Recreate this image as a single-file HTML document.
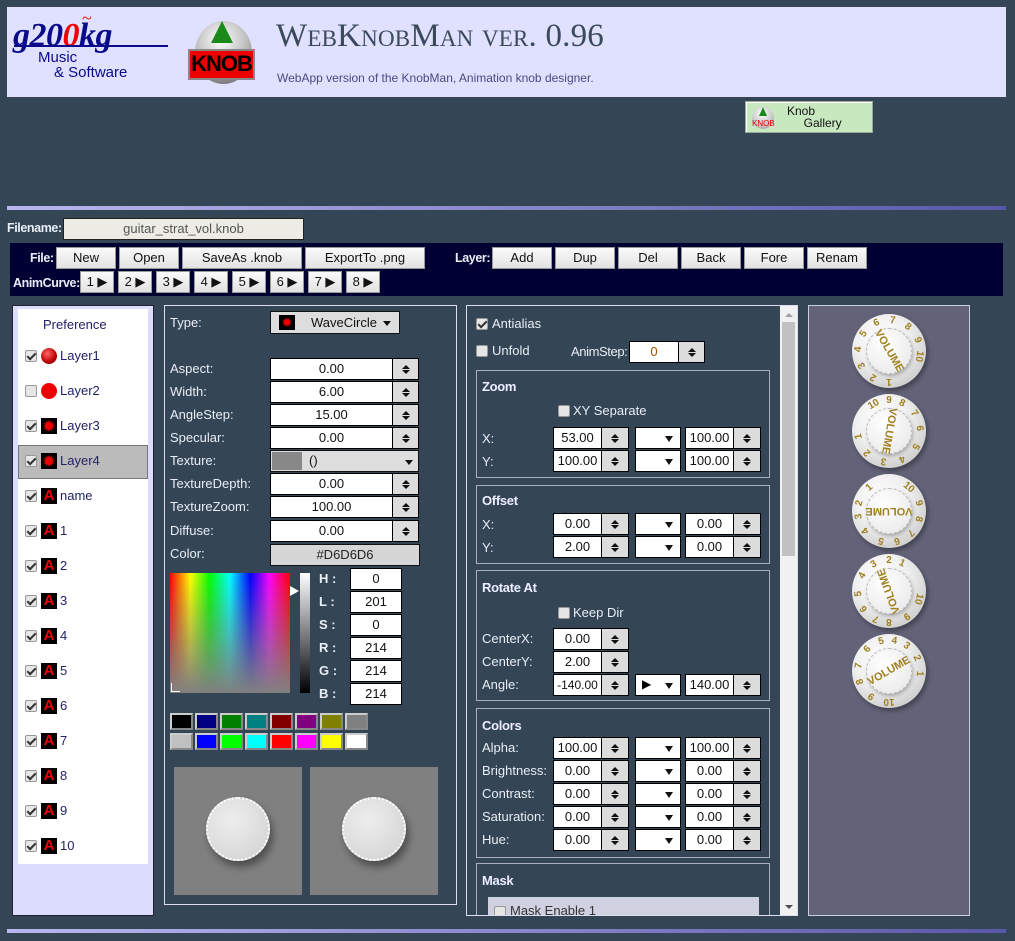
<!DOCTYPE html>
<html><head><meta charset="utf-8"><style>
*{box-sizing:border-box;margin:0;padding:0}
body{width:1015px;height:941px;background:#344556;position:relative;overflow:hidden;font-family:"Liberation Sans",sans-serif;font-size:13px;color:#e8eef6}
.a{position:absolute}
.l{position:absolute;color:#e8eef6;font-size:13px;line-height:16px;white-space:nowrap}
.bl{font-weight:bold;font-size:12.5px;letter-spacing:-0.4px}
.b{position:absolute;height:22px;background:linear-gradient(#fafafa,#e2e2e2);border:1px solid #999;color:#111;font-size:13px;text-align:center;line-height:20px}
.in{position:absolute;height:22px;background:#fff;border:1px solid #000;color:#111;text-align:center;line-height:20px;font-size:13px}
.sp{position:absolute;height:22px;width:28px;background:#dcdcdc;border:1px solid #000}
.sp:before,.sp:after{content:"";position:absolute;left:50%;margin-left:-4px;border-left:4px solid transparent;border-right:4px solid transparent}
.sp:before{top:6px;border-bottom:4px solid #111}
.sp:after{top:11px;border-top:4px solid #111}
.sel{position:absolute;height:22px;width:46px;background:#fff;border:1px solid #000}
.sel:after{content:"";position:absolute;right:7px;top:8px;border-left:4px solid transparent;border-right:4px solid transparent;border-top:6px solid #111}
.cb{position:absolute;width:12px;height:12px;background:#e6e6e6;border:1px solid #999;border-radius:2px}
.cb.c:after{content:"";position:absolute;left:3px;top:0px;width:3px;height:7px;border:solid #333;border-width:0 2px 2px 0;transform:rotate(45deg)}
.box{position:absolute;border:1px solid #aab0bb}
.t{position:absolute;font-weight:bold;font-size:13px;color:#eef;letter-spacing:-0.3px}
.lay{position:absolute;left:25px;height:16px;color:#222266;font-size:13px}
.ic{position:absolute;left:16px;top:0;width:16px;height:16px;background:#000;color:#e00;font-weight:bold;font-size:15px;line-height:16px;text-align:center;font-family:"Liberation Sans",sans-serif}
.ic.s{color:#e00;font-size:14px}
.lt{position:absolute;left:35px;top:0;line-height:16px}
.sw{position:absolute;width:23px;height:17px;border:2px solid #ccc;border-right-color:#888;border-bottom-color:#888}
.kn{position:absolute;width:74px;height:74px;border-radius:50%;background:radial-gradient(circle at 40% 35%,#fff 0,#f0f0f0 40%,#ccc 80%,#aaa 100%);box-shadow:2px 3px 5px rgba(0,0,0,.35)}
.kn i{position:absolute;left:14px;top:14px;width:46px;height:46px;border-radius:50%;border:1px dashed #bbb;background:radial-gradient(circle at 40% 35%,#fff,#e6e6e6);box-shadow:1px 2px 3px rgba(0,0,0,.25)}
.kn b{position:absolute;left:0;top:30px;width:74px;text-align:center;font-size:11px;line-height:14px;color:#a08020;font-family:"Liberation Sans",sans-serif;transform-origin:37px 7px}
.kn s{position:absolute;left:30px;top:1px;width:14px;text-align:center;font-size:10px;font-weight:bold;line-height:11px;color:#a08020;text-decoration:none;transform-origin:7px 36px}
</style></head><body>

<!-- header -->
<div class="a" style="left:7px;top:7px;width:999px;height:90px;background:#e0e0ff"></div>
<div class="a" style="left:13px;top:17px;font:italic bold 34px 'Liberation Serif',serif;color:#0a0a8a;letter-spacing:-0.5px">g20<span style="color:#e00">0</span>kg</div>
<div class="a" style="left:82px;top:8px;font:18px 'Liberation Serif',serif;color:#e00">~</div>
<div class="a" style="left:14px;top:45px;width:154px;height:2px;background:#0a0a8a"></div>
<div class="a" style="left:38px;top:49px;font-size:15px;color:#0a0a8a">Music</div>
<div class="a" style="left:54px;top:64px;font-size:15px;color:#0a0a8a">&amp; Software</div>
<div class="a" style="left:195px;top:21px;width:57px;height:63px;border-radius:50%;background:radial-gradient(circle at 45% 30%,#fff,#bbb 50%,#555 100%)"></div>
<div class="a" style="left:211px;top:21px;width:0;height:0;border-left:11px solid transparent;border-right:11px solid transparent;border-bottom:22px solid #1a8a1a"></div>
<div class="a" style="left:188px;top:49px;width:67px;height:31px;background:#e00;border:2px solid #888;color:#000;font:bold 22px 'Liberation Sans',sans-serif;text-align:center;line-height:26px;letter-spacing:-1px">KNOB</div>
<div class="a" style="left:276px;top:18px;font:33px 'Liberation Serif',serif;font-variant:small-caps;color:#3a4a5a;letter-spacing:0.2px">WebKnobMan ver. 0.96</div>
<div class="a" style="left:277px;top:71px;font-size:12px;color:#4a4a80">WebApp version of the KnobMan, Animation knob designer.</div>

<div class="a" style="left:745px;top:101px;width:128px;height:32px;background:#c8e8c0;border:1px solid #9a9;box-shadow:1px 1px 0 #fff inset"></div>
<div class="a" style="left:752px;top:107px;width:22px;height:22px;border-radius:50%;background:radial-gradient(circle at 45% 30%,#fff,#999)"></div>
<div class="a" style="left:759px;top:107px;border-left:4px solid transparent;border-right:4px solid transparent;border-bottom:9px solid #1a8a1a"></div>
<div class="a" style="left:752px;top:119px;font-size:8px;color:#e00">KNOB</div>
<div class="a" style="left:787px;top:105px;color:#111;font-size:12px;line-height:12px">Knob<br>&nbsp;&nbsp;&nbsp;&nbsp;&nbsp;Gallery</div>

<div class="a" style="left:7px;top:206px;width:999px;height:4px;background:linear-gradient(90deg,#b8b8f0,#5858a8)"></div>
<div class="a" style="left:7px;top:929px;width:999px;height:4px;background:linear-gradient(90deg,#b8b8f0,#5858a8)"></div>

<div class="l bl" style="left:7px;top:220px">Filename:</div>
<div class="a" style="left:63px;top:218px;width:241px;height:22px;background:#ecebe4;border:1px solid #222;color:#555;text-align:center;line-height:20px">guitar_strat_vol.knob</div>

<!-- toolbar -->
<div class="a" style="left:10px;top:243px;width:993px;height:53px;background:#000033"></div>
<div class="l bl" style="left:30px;top:250px">File:</div>
<div class="b" style="left:56px;top:247px;width:60px">New</div>
<div class="b" style="left:119px;top:247px;width:60px">Open</div>
<div class="b" style="left:182px;top:247px;width:120px">SaveAs .knob</div>
<div class="b" style="left:305px;top:247px;width:120px">ExportTo .png</div>
<div class="l bl" style="left:455px;top:250px">Layer:</div>
<div class="b" style="left:492px;top:247px;width:60px">Add</div>
<div class="b" style="left:555px;top:247px;width:60px">Dup</div>
<div class="b" style="left:618px;top:247px;width:60px">Del</div>
<div class="b" style="left:681px;top:247px;width:60px">Back</div>
<div class="b" style="left:744px;top:247px;width:60px">Fore</div>
<div class="b" style="left:807px;top:247px;width:60px">Renam</div>
<div class="l bl" style="left:13px;top:275px">AnimCurve:</div>
<div class="b" style="left:80px;top:271px;width:34px">1 ▶</div>
<div class="b" style="left:118px;top:271px;width:34px">2 ▶</div>
<div class="b" style="left:156px;top:271px;width:34px">3 ▶</div>
<div class="b" style="left:194px;top:271px;width:34px">4 ▶</div>
<div class="b" style="left:232px;top:271px;width:34px">5 ▶</div>
<div class="b" style="left:270px;top:271px;width:34px">6 ▶</div>
<div class="b" style="left:308px;top:271px;width:34px">7 ▶</div>
<div class="b" style="left:346px;top:271px;width:34px">8 ▶</div>

<!-- left panel -->
<div class="a" style="left:12px;top:305px;width:142px;height:611px;background:#dcdcff;border:1px solid #223"></div>
<div class="a" style="left:18px;top:309px;width:130px;height:555px;background:#fff"></div>
<div class="a" style="left:43px;top:317px;color:#222266">Preference</div>
<div class="a" style="left:18px;top:445px;width:130px;height:34px;background:#bbb;border:1px solid #777"></div>
<div class="a" style="left:0;top:348px">
<div class="lay" style="top:0"><div class="cb c" style="left:0;top:2px"></div><div class="ic" style="background:radial-gradient(circle at 40% 35%,#f66,#b00 60%,#600);border-radius:50%"></div><div class="lt">Layer1</div></div>
<div class="lay" style="top:35px"><div class="cb" style="left:0;top:2px"></div><div class="ic" style="background:#e00;border-radius:50%"></div><div class="lt">Layer2</div></div>
<div class="lay" style="top:70px"><div class="cb c" style="left:0;top:2px"></div><div class="ic s">✹</div><div class="lt">Layer3</div></div>
<div class="lay" style="top:105px"><div class="cb c" style="left:0;top:2px"></div><div class="ic s">✹</div><div class="lt">Layer4</div></div>
<div class="lay" style="top:140px"><div class="cb c" style="left:0;top:2px"></div><div class="ic">A</div><div class="lt">name</div></div>
<div class="lay" style="top:175px"><div class="cb c" style="left:0;top:2px"></div><div class="ic">A</div><div class="lt">1</div></div>
<div class="lay" style="top:210px"><div class="cb c" style="left:0;top:2px"></div><div class="ic">A</div><div class="lt">2</div></div>
<div class="lay" style="top:245px"><div class="cb c" style="left:0;top:2px"></div><div class="ic">A</div><div class="lt">3</div></div>
<div class="lay" style="top:280px"><div class="cb c" style="left:0;top:2px"></div><div class="ic">A</div><div class="lt">4</div></div>
<div class="lay" style="top:315px"><div class="cb c" style="left:0;top:2px"></div><div class="ic">A</div><div class="lt">5</div></div>
<div class="lay" style="top:350px"><div class="cb c" style="left:0;top:2px"></div><div class="ic">A</div><div class="lt">6</div></div>
<div class="lay" style="top:385px"><div class="cb c" style="left:0;top:2px"></div><div class="ic">A</div><div class="lt">7</div></div>
<div class="lay" style="top:420px"><div class="cb c" style="left:0;top:2px"></div><div class="ic">A</div><div class="lt">8</div></div>
<div class="lay" style="top:455px"><div class="cb c" style="left:0;top:2px"></div><div class="ic">A</div><div class="lt">9</div></div>
<div class="lay" style="top:490px"><div class="cb c" style="left:0;top:2px"></div><div class="ic">A</div><div class="lt">10</div></div>
</div>

<!-- middle panel -->
<div class="box" style="left:164px;top:305px;width:293px;height:600px;border-color:#dde"></div>
<div class="l" style="left:170px;top:315px">Type:</div>
<div class="a" style="left:270px;top:311px;width:130px;height:23px;background:#ddd;border:1px solid #111;color:#111;line-height:21px;padding-left:40px">WaveCircle</div>
<div class="a" style="left:279px;top:315px;width:16px;height:15px;background:#000;color:#e00;font-size:13px;line-height:15px;text-align:center">✹</div>
<div class="a" style="left:383px;top:321px;border-left:4px solid transparent;border-right:4px solid transparent;border-top:5px solid #111"></div>

<div class="l" style="left:170px;top:361px">Aspect:</div><div class="in" style="left:270px;top:358px;width:123px">0.00</div><div class="sp" style="left:392px;top:358px;width:27px"></div>
<div class="l" style="left:170px;top:384px">Width:</div><div class="in" style="left:270px;top:381px;width:123px">6.00</div><div class="sp" style="left:392px;top:381px;width:27px"></div>
<div class="l" style="left:170px;top:407px">AngleStep:</div><div class="in" style="left:270px;top:404px;width:123px">15.00</div><div class="sp" style="left:392px;top:404px;width:27px"></div>
<div class="l" style="left:170px;top:430px">Specular:</div><div class="in" style="left:270px;top:427px;width:123px">0.00</div><div class="sp" style="left:392px;top:427px;width:27px"></div>
<div class="l" style="left:170px;top:453px">Texture:</div>
<div class="a" style="left:270px;top:450px;width:149px;height:22px;background:#ddd;border:1px solid #111;color:#111;line-height:20px;padding-left:38px">()</div>
<div class="a" style="left:272px;top:452px;width:30px;height:18px;background:#888"></div>
<div class="a" style="left:405px;top:460px;border-left:4px solid transparent;border-right:4px solid transparent;border-top:5px solid #111"></div>
<div class="l" style="left:170px;top:476px">TextureDepth:</div><div class="in" style="left:270px;top:473px;width:123px">0.00</div><div class="sp" style="left:392px;top:473px;width:27px"></div>
<div class="l" style="left:170px;top:499px">TextureZoom:</div><div class="in" style="left:270px;top:496px;width:123px">100.00</div><div class="sp" style="left:392px;top:496px;width:27px"></div>
<div class="l" style="left:170px;top:523px">Diffuse:</div><div class="in" style="left:270px;top:520px;width:123px">0.00</div><div class="sp" style="left:392px;top:520px;width:27px"></div>
<div class="l" style="left:170px;top:546px">Color:</div>
<div class="a" style="left:270px;top:544px;width:150px;height:22px;background:#d6d6d6;border:1px solid #111;color:#222;text-align:center;line-height:20px">#D6D6D6</div>

<div class="a" style="left:170px;top:573px;width:120px;height:120px;background:linear-gradient(rgba(128,128,128,0),#808080),linear-gradient(90deg,#f00,#ff0 17%,#0f0 33%,#0ff 50%,#00f 67%,#f0f 83%,#f00)"></div>
<div class="a" style="left:171px;top:683px;width:9px;height:9px;border-left:1px solid #fff;border-bottom:1px solid #fff"></div>
<div class="a" style="left:300px;top:573px;width:10px;height:120px;background:linear-gradient(#fff,#000)"></div>
<div class="a" style="left:290px;top:586px;border-top:5px solid transparent;border-bottom:5px solid transparent;border-left:9px solid #fff"></div>
<div class="l" style="left:319px;top:571px;font-weight:bold">H :</div><div class="in" style="left:350px;top:568px;width:52px">0</div>
<div class="l" style="left:319px;top:594px;font-weight:bold">L :</div><div class="in" style="left:350px;top:591px;width:52px">201</div>
<div class="l" style="left:319px;top:617px;font-weight:bold">S :</div><div class="in" style="left:350px;top:614px;width:52px">0</div>
<div class="l" style="left:319px;top:640px;font-weight:bold">R :</div><div class="in" style="left:350px;top:637px;width:52px">214</div>
<div class="l" style="left:319px;top:663px;font-weight:bold">G :</div><div class="in" style="left:350px;top:660px;width:52px">214</div>
<div class="l" style="left:319px;top:686px;font-weight:bold">B :</div><div class="in" style="left:350px;top:683px;width:52px">214</div>

<div class="sw" style="left:170px;top:713px;background:#000"></div><div class="sw" style="left:195px;top:713px;background:#000080"></div><div class="sw" style="left:220px;top:713px;background:#008000"></div><div class="sw" style="left:245px;top:713px;background:#008080"></div><div class="sw" style="left:270px;top:713px;background:#800000"></div><div class="sw" style="left:295px;top:713px;background:#800080"></div><div class="sw" style="left:320px;top:713px;background:#808000"></div><div class="sw" style="left:345px;top:713px;background:#808080"></div>
<div class="sw" style="left:170px;top:733px;background:#c0c0c0"></div><div class="sw" style="left:195px;top:733px;background:#00f"></div><div class="sw" style="left:220px;top:733px;background:#0f0"></div><div class="sw" style="left:245px;top:733px;background:#0ff"></div><div class="sw" style="left:270px;top:733px;background:#f00"></div><div class="sw" style="left:295px;top:733px;background:#f0f"></div><div class="sw" style="left:320px;top:733px;background:#ff0"></div><div class="sw" style="left:345px;top:733px;background:#fff"></div>

<div class="a" style="left:174px;top:767px;width:128px;height:128px;background:#808080"></div>
<div class="a" style="left:206px;top:797px;width:64px;height:64px;border-radius:50%;background:radial-gradient(circle at 40% 35%,#eee,#d0d0d0);border:2px dotted #fff;box-shadow:3px 6px 8px rgba(0,0,0,.4)"></div>
<div class="a" style="left:310px;top:767px;width:128px;height:128px;background:#808080"></div>
<div class="a" style="left:342px;top:797px;width:64px;height:64px;border-radius:50%;background:radial-gradient(circle at 40% 35%,#eee,#d0d0d0);border:2px dotted #fff;box-shadow:3px 6px 8px rgba(0,0,0,.4)"></div>

<!-- right-center panel -->
<div class="box" style="left:466px;top:305px;width:332px;height:611px;border-color:#dde"></div>
<div class="a" style="left:780px;top:306px;width:17px;height:609px;background:#f1f1f1"></div>
<div class="a" style="left:782px;top:322px;width:13px;height:234px;background:#c1c1c1"></div>
<div class="a" style="left:785px;top:313px;border-left:4px solid transparent;border-right:4px solid transparent;border-bottom:4px solid #a3a3a3"></div>
<div class="a" style="left:785px;top:905px;border-left:4px solid transparent;border-right:4px solid transparent;border-top:4px solid #505050"></div>

<div class="cb c" style="left:476px;top:318px"></div><div class="l" style="left:492px;top:316px">Antialias</div>
<div class="cb" style="left:476px;top:345px"></div><div class="l" style="left:492px;top:343px">Unfold</div>
<div class="l" style="left:571px;top:344px;letter-spacing:-0.4px">AnimStep:</div><div class="in" style="left:629px;top:341px;width:50px;color:#a05000">0</div><div class="sp" style="left:678px;top:341px;width:27px"></div>

<div class="box" style="left:476px;top:370px;width:294px;height:108px"></div>
<div class="t" style="left:482px;top:379px">Zoom</div>
<div class="cb" style="left:558px;top:405px"></div><div class="l" style="left:573px;top:403px">XY Separate</div>
<div class="l" style="left:482px;top:431px">X:</div><div class="in" style="left:553px;top:427px;width:49px">53.00</div><div class="sp" style="left:601px;top:427px"></div><div class="sel" style="left:635px;top:427px"></div><div class="in" style="left:685px;top:427px;width:49px">100.00</div><div class="sp" style="left:733px;top:427px"></div>
<div class="l" style="left:482px;top:454px">Y:</div><div class="in" style="left:553px;top:450px;width:49px">100.00</div><div class="sp" style="left:601px;top:450px"></div><div class="sel" style="left:635px;top:450px"></div><div class="in" style="left:685px;top:450px;width:49px">100.00</div><div class="sp" style="left:733px;top:450px"></div>

<div class="box" style="left:476px;top:485px;width:294px;height:79px"></div>
<div class="t" style="left:482px;top:493px">Offset</div>
<div class="l" style="left:482px;top:517px">X:</div><div class="in" style="left:553px;top:513px;width:49px">0.00</div><div class="sp" style="left:601px;top:513px"></div><div class="sel" style="left:635px;top:513px"></div><div class="in" style="left:685px;top:513px;width:49px">0.00</div><div class="sp" style="left:733px;top:513px"></div>
<div class="l" style="left:482px;top:540px">Y:</div><div class="in" style="left:553px;top:536px;width:49px">2.00</div><div class="sp" style="left:601px;top:536px"></div><div class="sel" style="left:635px;top:536px"></div><div class="in" style="left:685px;top:536px;width:49px">0.00</div><div class="sp" style="left:733px;top:536px"></div>

<div class="box" style="left:476px;top:570px;width:294px;height:131px"></div>
<div class="t" style="left:482px;top:580px">Rotate At</div>
<div class="cb" style="left:558px;top:607px"></div><div class="l" style="left:573px;top:605px">Keep Dir</div>
<div class="l" style="left:482px;top:631px">CenterX:</div><div class="in" style="left:553px;top:628px;width:49px">0.00</div><div class="sp" style="left:601px;top:628px"></div>
<div class="l" style="left:482px;top:654px">CenterY:</div><div class="in" style="left:553px;top:651px;width:49px">2.00</div><div class="sp" style="left:601px;top:651px"></div>
<div class="l" style="left:482px;top:677px">Angle:</div><div class="in" style="left:553px;top:674px;width:49px;font-size:12px">-140.00</div><div class="sp" style="left:601px;top:674px"></div><div class="sel" style="left:635px;top:674px"><span style="position:absolute;left:6px;top:2px;color:#000;font-size:12px">▶</span></div><div class="in" style="left:685px;top:674px;width:49px">140.00</div><div class="sp" style="left:733px;top:674px"></div>

<div class="box" style="left:476px;top:708px;width:294px;height:150px"></div>
<div class="t" style="left:482px;top:718px">Colors</div>
<div class="l" style="left:482px;top:740px">Alpha:</div><div class="in" style="left:553px;top:737px;width:49px">100.00</div><div class="sp" style="left:601px;top:737px"></div><div class="sel" style="left:635px;top:737px"></div><div class="in" style="left:685px;top:737px;width:49px">100.00</div><div class="sp" style="left:733px;top:737px"></div>
<div class="l" style="left:482px;top:763px">Brightness:</div><div class="in" style="left:553px;top:760px;width:49px">0.00</div><div class="sp" style="left:601px;top:760px"></div><div class="sel" style="left:635px;top:760px"></div><div class="in" style="left:685px;top:760px;width:49px">0.00</div><div class="sp" style="left:733px;top:760px"></div>
<div class="l" style="left:482px;top:786px">Contrast:</div><div class="in" style="left:553px;top:783px;width:49px">0.00</div><div class="sp" style="left:601px;top:783px"></div><div class="sel" style="left:635px;top:783px"></div><div class="in" style="left:685px;top:783px;width:49px">0.00</div><div class="sp" style="left:733px;top:783px"></div>
<div class="l" style="left:482px;top:809px">Saturation:</div><div class="in" style="left:553px;top:806px;width:49px">0.00</div><div class="sp" style="left:601px;top:806px"></div><div class="sel" style="left:635px;top:806px"></div><div class="in" style="left:685px;top:806px;width:49px">0.00</div><div class="sp" style="left:733px;top:806px"></div>
<div class="l" style="left:482px;top:832px">Hue:</div><div class="in" style="left:553px;top:829px;width:49px">0.00</div><div class="sp" style="left:601px;top:829px"></div><div class="sel" style="left:635px;top:829px"></div><div class="in" style="left:685px;top:829px;width:49px">0.00</div><div class="sp" style="left:733px;top:829px"></div>

<div class="box" style="left:476px;top:863px;width:294px;height:60px;border-bottom:none"></div>
<div class="t" style="left:482px;top:873px">Mask</div>
<div class="a" style="left:488px;top:897px;width:271px;height:18px;background:#cfd0e0;overflow:hidden"><div class="cb" style="left:6px;top:9px"></div><span style="position:absolute;left:22px;top:6px;color:#333;font-size:13px">Mask Enable 1</span></div>
<div class="a" style="left:466px;top:915px;width:332px;height:14px;background:#344556"></div>
<div class="a" style="left:466px;top:915px;width:332px;height:1px;background:#dde"></div>

<!-- preview panel -->
<div class="a" style="left:808px;top:305px;width:162px;height:611px;background:#626378;border:1px solid #ccd"></div>
<div class="kn" style="left:852px;top:314px"><s style="transform:rotate(-180deg)">1</s><s style="transform:rotate(-149deg)">2</s><s style="transform:rotate(-118deg)">3</s><s style="transform:rotate(-87deg)">4</s><s style="transform:rotate(-56deg)">5</s><s style="transform:rotate(-24deg)">6</s><s style="transform:rotate(7deg)">7</s><s style="transform:rotate(38deg)">8</s><s style="transform:rotate(69deg)">9</s><s style="transform:rotate(100deg)">10</s><i></i><b style="transform:rotate(60deg)">VOLUME</b></div>
<div class="kn" style="left:852px;top:394px"><s style="transform:rotate(-100deg)">1</s><s style="transform:rotate(-135deg)">2</s><s style="transform:rotate(-170deg)">3</s><s style="transform:rotate(155deg)">4</s><s style="transform:rotate(120deg)">5</s><s style="transform:rotate(85deg)">6</s><s style="transform:rotate(55deg)">7</s><s style="transform:rotate(25deg)">8</s><s style="transform:rotate(0deg)">9</s><s style="transform:rotate(-30deg)">10</s><i></i><b style="transform:rotate(100deg)">VOLUME</b></div>
<div class="kn" style="left:852px;top:474px"><s style="transform:rotate(-40deg)">1</s><s style="transform:rotate(-75deg)">2</s><s style="transform:rotate(-100deg)">3</s><s style="transform:rotate(-130deg)">4</s><s style="transform:rotate(-165deg)">5</s><s style="transform:rotate(165deg)">6</s><s style="transform:rotate(135deg)">7</s><s style="transform:rotate(105deg)">8</s><s style="transform:rotate(75deg)">9</s><s style="transform:rotate(40deg)">10</s><i></i><b style="transform:rotate(180deg)">VOLUME</b></div>
<div class="kn" style="left:852px;top:554px"><s style="transform:rotate(25deg)">1</s><s style="transform:rotate(0deg)">2</s><s style="transform:rotate(-30deg)">3</s><s style="transform:rotate(-60deg)">4</s><s style="transform:rotate(-95deg)">5</s><s style="transform:rotate(-125deg)">6</s><s style="transform:rotate(-155deg)">7</s><s style="transform:rotate(180deg)">8</s><s style="transform:rotate(145deg)">9</s><s style="transform:rotate(105deg)">10</s><i></i><b style="transform:rotate(250deg)">VOLUME</b></div>
<div class="kn" style="left:852px;top:634px"><s style="transform:rotate(95deg)">1</s><s style="transform:rotate(65deg)">2</s><s style="transform:rotate(35deg)">3</s><s style="transform:rotate(10deg)">4</s><s style="transform:rotate(-15deg)">5</s><s style="transform:rotate(-45deg)">6</s><s style="transform:rotate(-80deg)">7</s><s style="transform:rotate(-110deg)">8</s><s style="transform:rotate(-145deg)">9</s><s style="transform:rotate(180deg)">10</s><i></i><b style="transform:rotate(-30deg)">VOLUME</b></div>
</body></html>
